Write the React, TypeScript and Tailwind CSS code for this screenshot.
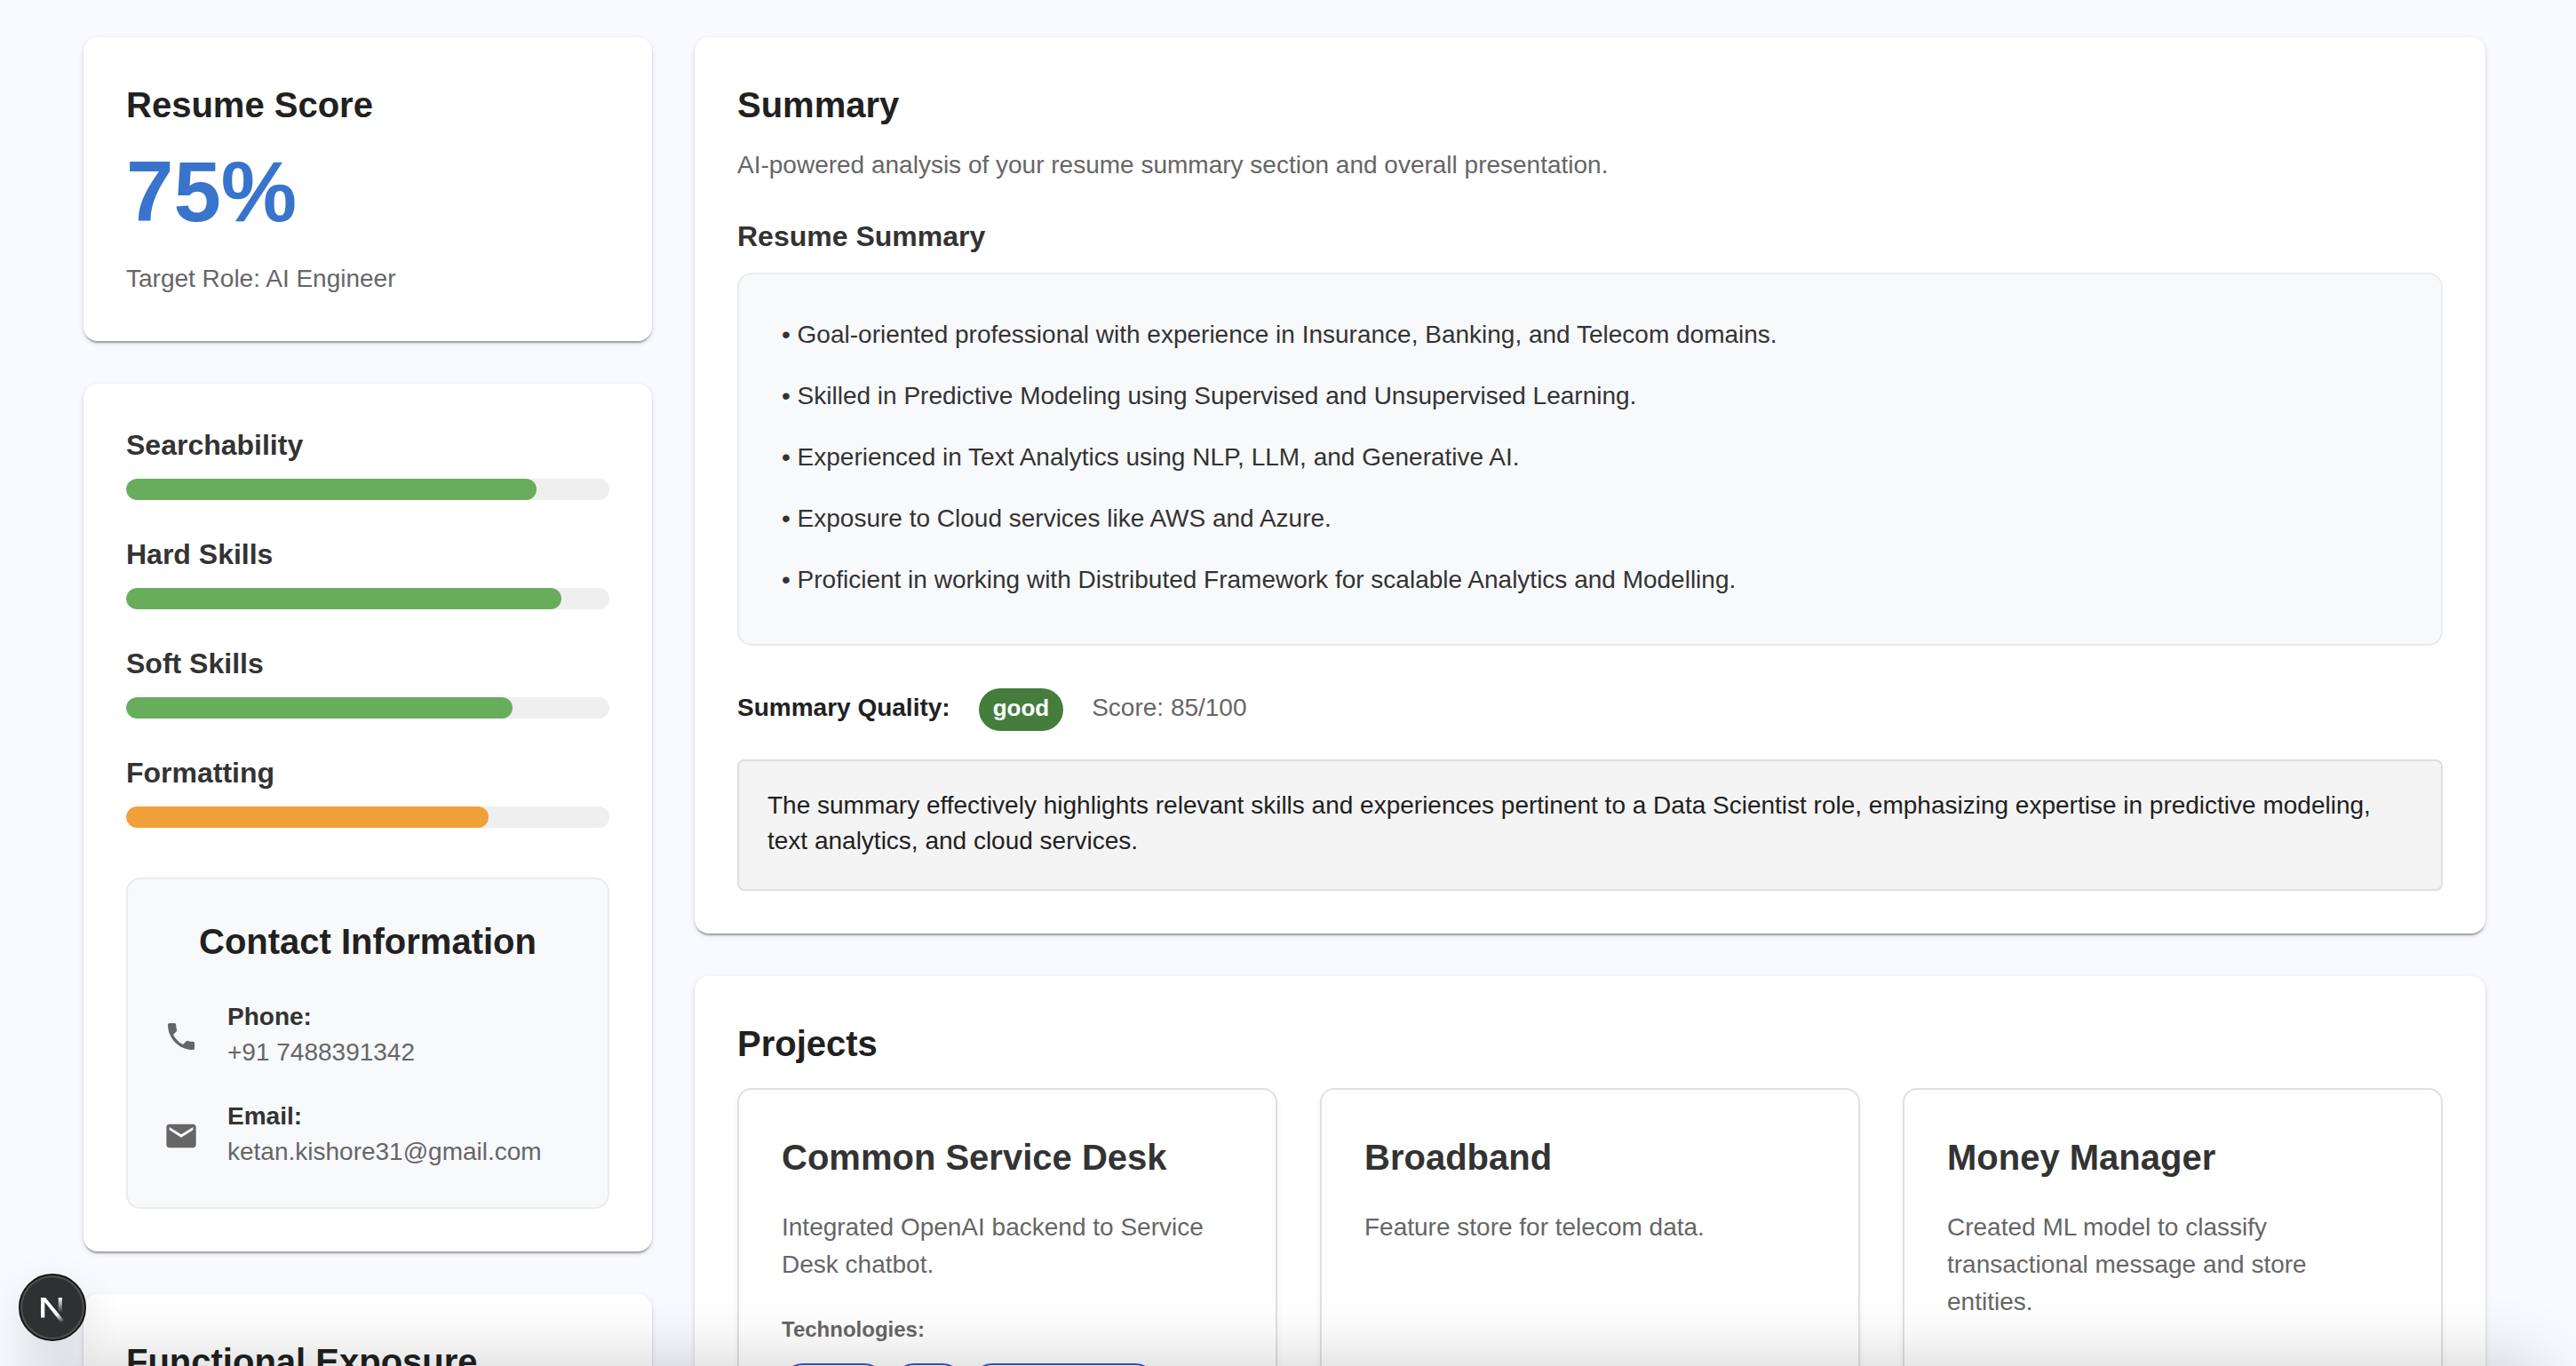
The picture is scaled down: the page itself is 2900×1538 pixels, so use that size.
import { MdEmail, MdPhone } from "react-icons/md";
import type { ReactNode } from "react";

const metrics = [
  { label: "Searchability", value: 85, color: "bg-[#67ad5c]" },
  { label: "Hard Skills", value: 90, color: "bg-[#67ad5c]" },
  { label: "Soft Skills", value: 80, color: "bg-[#67ad5c]" },
  { label: "Formatting", value: 75, color: "bg-[#f19f38]" },
];

const summaryPoints = [
  "Goal-oriented professional with experience in Insurance, Banking, and Telecom domains.",
  "Skilled in Predictive Modeling using Supervised and Unsupervised Learning.",
  "Experienced in Text Analytics using NLP, LLM, and Generative AI.",
  "Exposure to Cloud services like AWS and Azure.",
  "Proficient in working with Distributed Framework for scalable Analytics and Modelling.",
];

const projects = [
  {
    name: "Common Service Desk",
    description: "Integrated OpenAI backend to Service Desk chatbot.",
    chips: ["w-[117px]", "w-20", "w-[209px]"],
  },
  { name: "Broadband", description: "Feature store for telecom data.", chips: [] },
  {
    name: "Money Manager",
    description: "Created ML model to classify transactional message and store entities.",
    chips: [],
  },
];

function Card({ children }: { children: ReactNode }) {
  return (
    <section className="rounded-2xl bg-white p-12 shadow-[0_4px_2px_-2px_rgba(0,0,0,0.2),0_2px_2px_0_rgba(0,0,0,0.14),0_2px_6px_0_rgba(0,0,0,0.12)]">
      {children}
    </section>
  );
}

function CardTitle({ children }: { children: ReactNode }) {
  return <h2 className="text-[40px] leading-14 font-bold">{children}</h2>;
}

function Metric({ label, value, color }: { label: string; value: number; color: string }) {
  return (
    <div>
      <h3 className="text-[32px] leading-[43px] font-bold text-[#333]">{label}</h3>
      <div
        role="progressbar"
        aria-label={label}
        aria-valuenow={value}
        className="mt-4 h-6 overflow-hidden rounded-xl bg-[#efefef]"
      >
        <div className={`h-full rounded-xl ${color}`} style={{ width: `${value}%` }} />
      </div>
    </div>
  );
}

function ContactRow({ icon, label, children }: { icon: ReactNode; label: string; children: ReactNode }) {
  return (
    <div className="flex items-center gap-8">
      <span className="text-[40px] text-[#666]">{icon}</span>
      <div className="pb-1 text-[28px] leading-10">
        <p className="font-bold text-[#333]">{label}</p>
        <p className="text-[#666]">{children}</p>
      </div>
    </div>
  );
}

function NextLogo() {
  return (
    <svg viewBox="2 2 72 72" className="size-full" fill="none">
      <defs>
        <linearGradient id="diag" x1="40" y1="39" x2="51" y2="54" gradientUnits="userSpaceOnUse">
          <stop stopColor="#fff" />
          <stop offset="0.4" stopColor="#fff" />
          <stop offset="1" stopColor="#fff" stopOpacity="0" />
        </linearGradient>
        <linearGradient id="stem" x1="47" y1="27" x2="47" y2="44" gradientUnits="userSpaceOnUse">
          <stop stopColor="#fff" />
          <stop offset="1" stopColor="#fff" stopOpacity="0" />
        </linearGradient>
      </defs>
      <path d="M25 27h5.200L51 52.500 48 55.500 29.300 32V49.500H25Z" fill="url(#diag)" />
      <path d="M44.700 27h4.200v17h-4.200Z" fill="url(#stem)" />
    </svg>
  );
}

export default function App() {
  return (
    <div className="relative h-screen overflow-hidden bg-[#f9faff] pt-[42px] pr-[102px] pl-[94px] font-['Liberation_Sans',Arial,sans-serif] text-[#212121]">
      <div className="grid grid-cols-12 items-start gap-12">
        <aside className="col-span-3 flex flex-col gap-12">
          <Card>
            <CardTitle>Resume Score</CardTitle>
            <p className="mt-3.5 text-[96px] leading-[112px] font-bold text-[#3874cc]">75%</p>
            <p className="mt-5 text-[28px] leading-11 text-[#666]">Target Role: AI Engineer</p>
          </Card>
          <Card>
            <div className="flex flex-col gap-10">
              {metrics.map((m) => (
                <Metric key={m.label} {...m} />
              ))}
            </div>
            <div className="mt-14 rounded-2xl border-2 border-[#e9ebed] bg-[#f8f9fb] px-10 pt-[42px] pb-[38px]">
              <h2 className="text-center text-[40px] leading-14 font-bold">Contact Information</h2>
              <div className="mt-[37px] flex flex-col gap-7">
                <ContactRow icon={<MdPhone />} label="Phone:">
                  +91 7488391342
                </ContactRow>
                <ContactRow icon={<MdEmail />} label="Email:">
                  ketan.kishore31@gmail.com
                </ContactRow>
              </div>
            </div>
          </Card>
          <Card>
            <CardTitle>Functional Exposure</CardTitle>
          </Card>
        </aside>

        <main className="col-span-9 flex flex-col gap-12">
          <Card>
            <CardTitle>Summary</CardTitle>
            <p className="mt-[18px] text-[28px] leading-11 text-[#666]">
              AI-powered analysis of your resume summary section and overall presentation.
            </p>
            <h3 className="mt-9 text-[32px] leading-11 font-bold text-[#333]">Resume Summary</h3>
            <div className="mt-[19px] flex flex-col gap-6 rounded-2xl border-2 border-[#e9ebed] bg-[#f8f9fb] px-12 pt-[45px] pb-[50px] text-[28px] leading-[45px] text-[#333]">
              {summaryPoints.map((point) => (
                <p key={point}>• {point}</p>
              ))}
            </div>
            <div className="mt-12 flex items-start gap-8 text-[28px] leading-11">
              <p className="font-bold">Summary Quality:</p>
              <span className="h-12 rounded-3xl bg-[#447d3c] px-4 text-[26px] leading-11 font-bold text-white">
                good
              </span>
              <p className="text-[#666]">Score: 85/100</p>
            </div>
            <p className="mt-8 rounded-lg border-2 border-[#dfdfdf] bg-[#f4f4f4] px-8 pt-[30px] pb-[34px] text-[28px] leading-10">
              The summary effectively highlights relevant skills and experiences pertinent to a Data Scientist role,
              emphasizing expertise in predictive modeling, text analytics, and cloud services.
            </p>
          </Card>
          <Card>
            <CardTitle>Projects</CardTitle>
            <div className="mt-[22px] grid grid-cols-3 gap-12">
              {projects.map((project) => (
                <article
                  key={project.name}
                  className="rounded-2xl border-2 border-[#e0e0e0] bg-white p-12 shadow-[0_4px_8px_rgba(0,0,0,0.05)]"
                >
                  <h3 className="text-[40px] leading-14 font-bold text-[#333]">{project.name}</h3>
                  <p className="mt-[30px] text-[28px] leading-[42px] text-[#666]">{project.description}</p>
                  {project.chips.length > 0 && (
                    <>
                      <p className="mt-[30px] text-2xl leading-11 font-bold text-[#666]">Technologies:</p>
                      <div className="mt-4 flex gap-2">
                        {project.chips.map((width) => (
                          <span key={width} className={`h-12 rounded-3xl border-2 border-[#3556d0] ${width}`} />
                        ))}
                      </div>
                    </>
                  )}
                </article>
              ))}
            </div>
          </Card>
        </main>
      </div>

      <div className="pointer-events-none absolute inset-x-10 top-full h-40 shadow-[0_0_80px_rgba(0,0,0,0.2)]" />
      <button
        type="button"
        aria-label="Open Next.js Dev Tools"
        className="absolute bottom-[28px] left-[21px] size-[76px] rounded-full border-2 border-[#171717] bg-[#2f3031] shadow-[inset_0_0_0_2px_#525252,0_16px_48px_rgba(0,0,0,0.1)]"
      >
        <NextLogo />
      </button>
    </div>
  );
}
